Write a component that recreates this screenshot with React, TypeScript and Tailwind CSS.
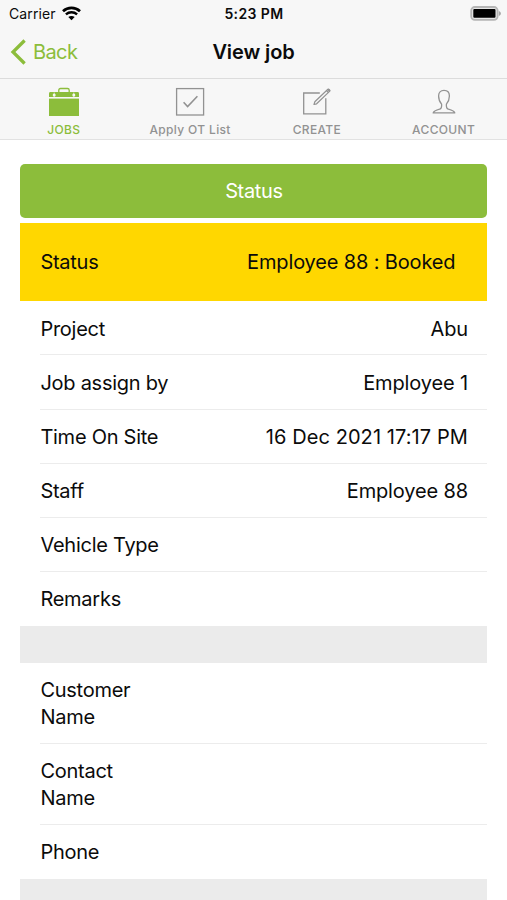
import type { ReactNode } from 'react';
import clsx from 'clsx';

interface TabItem {
  label: string;
  icon: ReactNode;
  active?: boolean;
}

interface RowProps {
  label: string;
  value?: string;
  wide?: boolean;
  last?: boolean;
}

function WifiIcon() {
  return (
    <svg width="19" height="15" viewBox="0 0 19 15" fill="none" className="mb-px">
      <path d="M1 5.2C5.8 .7 13.2 .7 18 5.2" stroke="#000" strokeWidth="2.7" />
      <path d="M3.9 8.4C7.1 5.5 11.9 5.5 15.1 8.4" stroke="#000" strokeWidth="2.4" />
      <path d="M9.5 14.2 6.3 11.1c1.8-1.6 4.6-1.6 6.4 0z" fill="#000" />
    </svg>
  );
}

function BatteryIcon() {
  return (
    <svg width="32" height="15" viewBox="0 0 32 15" className="mb-px">
      <rect x="1.2" y="1" width="26.4" height="12.8" rx="3.6" fill="#e6e6e6" stroke="#b5b5b5" strokeWidth="1.8" />
      <rect x="3.3" y="3" width="22.2" height="8.8" rx="1" fill="#000" />
      <path d="M28.8 5v5c1.3-.5 2.1-1.4 2.1-2.5S30.1 5.5 28.8 5z" fill="#a6a6a6" />
    </svg>
  );
}

function JobsIcon() {
  return (
    <svg width="32" height="30" viewBox="0 0 32 30" fill="none">
      <path d="M10.8 5V3.2c0-1.2.6-1.7 1.7-1.7h7c1.1 0 1.7.5 1.7 1.7V5" stroke="#8cbd3b" strokeWidth="1.3" />
      <path d="M1 10V6.5C1 5.5 1.5 5 2.5 5h27c1 0 1.5.5 1.5 1.5V10z" fill="#8cbd3b" />
      <path d="M1 11.6h30V29H1z" fill="#8cbd3b" />
      <path d="M6.2 5.5v5M25.8 5.5v5" stroke="#f7f7f7" strokeWidth=".6" />
      <circle cx="6.2" cy="8" r="1.5" fill="#f7f7f7" />
      <circle cx="25.8" cy="8" r="1.5" fill="#f7f7f7" />
    </svg>
  );
}

function ChecklistIcon() {
  return (
    <svg width="32" height="30" viewBox="0 0 32 30" fill="none" stroke="#929292">
      <rect x="2.6" y="1.6" width="27" height="26.4" strokeWidth="1.3" />
      <path d="m9.6 15.3 4 4.2 9.8-10.2" strokeWidth="1.6" />
    </svg>
  );
}

function CreateIcon() {
  return (
    <svg width="32" height="30" viewBox="0 0 32 30" fill="none" stroke="#929292">
      <path d="M18.8 6H2.7v20.9h22.1V11.3" strokeWidth="1.3" />
      <path d="m13 17.5.8-2.7L26.9 2.3c.8-.7 2.6.9 1.9 1.800L15.600 16.800z" strokeWidth="1.2" strokeLinejoin="round" />
      <path d="m25.500 3.600 1.900 1.900" strokeWidth="1.3" />
      <path d="m26.900 2.300 1.900 1.800" strokeWidth="1.8" />
    </svg>
  );
}

function AccountIcon() {
  return (
    <svg width="32" height="30" viewBox="0 0 32 30" fill="none" stroke="#929292">
      <path
        d="M13.6 17.2c-1.7-2-3-5-3-8.2 0-3.5 2-5.600 5.400-5.600s5.400 2.100 5.400 5.600c0 3.200-1.300 6.200-3 8.200-.3 2.900.1 4.300 2 5 3.500 1 5.900 1.700 6.400 3.700H5.200c.5-2 2.900-2.700 6.400-3.700 1.900-.7 2.300-2.100 2-5z"
        strokeWidth="1.3"
        strokeLinejoin="round"
      />
    </svg>
  );
}

const tabs: TabItem[] = [
  { label: 'JOBS', icon: <JobsIcon />, active: true },
  { label: 'Apply OT List', icon: <ChecklistIcon /> },
  { label: 'CREATE', icon: <CreateIcon /> },
  { label: 'ACCOUNT', icon: <AccountIcon /> },
];

const jobRows: RowProps[] = [
  { label: 'Project', value: 'Abu' },
  { label: 'Job assign by', value: 'Employee 1' },
  { label: 'Time On Site', value: '16 Dec 2021 17:17 PM', wide: true },
  { label: 'Staff', value: 'Employee 88' },
  { label: 'Vehicle Type' },
  { label: 'Remarks' },
];

const customerRows: RowProps[] = [
  { label: 'Customer Name' },
  { label: 'Contact Name' },
  { label: 'Phone' },
];

function Row({ label, value, wide, last }: RowProps) {
  return (
    <div
      className={clsx(
        'ml-5 flex justify-between border-b pt-[14.3px] pr-[19.5px] pb-[11.8px]',
        last ? 'border-transparent' : 'border-[#ececec]'
      )}
    >
      <span className="max-w-[130px]">{label}</span>
      {value && (
        <span className={clsx('whitespace-nowrap', wide ? 'tracking-[0.08px]' : 'tracking-[-0.15px]')}>{value}</span>
      )}
    </div>
  );
}

function Header() {
  return (
    <header className="border-b border-[#dcdcdc] bg-[#f7f7f7]">
      <div className="grid h-[27px] grid-cols-3 items-center pr-[5px] pl-[9px] text-[14px]">
        <div className="flex items-center gap-[6px]">
          <span className="tracking-[0.1px]">Carrier</span>
          <WifiIcon />
        </div>
        <span className="pr-[3px] text-center font-semibold tracking-[0.4px]">5:23 PM</span>
        <div className="flex justify-end">
          <BatteryIcon />
        </div>
      </div>
      <div className="grid h-[51px] grid-cols-3 items-center px-[10px] pb-px text-[20px]">
        <button className="flex items-center gap-[7px] text-[#8cbd3b]">
          <svg width="16" height="26" viewBox="0 0 16 26" fill="none" className="mb-px">
            <path d="M14.6 1.5 3 13l11.6 11.5" stroke="#8cbd3b" strokeWidth="3.3" />
          </svg>
          <span className="tracking-[-0.6px]">Back</span>
        </button>
        <h1 className="text-center font-semibold tracking-[-0.1px]">View job</h1>
      </div>
    </header>
  );
}

function TabBar() {
  return (
    <nav className="grid h-[61px] grid-cols-4 border-b border-[#e2e2e2] bg-[#f7f7f7] pt-[8px]">
      {tabs.map((tab) => (
        <button
          key={tab.label}
          className={clsx(
            'flex flex-col items-center',
            tab.active ? 'pl-px text-[#8cbd3b]' : 'text-[#929292]'
          )}
        >
          {tab.icon}
          <span className="mt-[5px] text-[12px] leading-4 font-medium tracking-[0.35px]">{tab.label}</span>
        </button>
      ))}
    </nav>
  );
}

export default function App() {
  return (
    <div className="h-[900px] overflow-hidden bg-white font-['Inter',sans-serif] text-[#0b0b0b]">
      <Header />
      <TabBar />
      <main className="pt-[23.5px] pr-[19.6px] pl-[20.4px] text-[20px] leading-[27px] tracking-[-0.26px]">
        <button className="h-[54.5px] w-full rounded-[5px] bg-[#8cbd3b] pt-[2px] tracking-[-0.35px] text-white">
          Status
        </button>
        <section className="mt-[5px] flex h-[78.4px] items-center justify-between bg-[#ffd700] pt-px pr-8 pl-5">
          <span>Status</span>
          <span className="tracking-[-0.15px]">Employee 88 : Booked</span>
        </section>
        <section>
          {jobRows.map((row, i) => (
            <Row key={row.label} {...row} last={i === jobRows.length - 1} />
          ))}
        </section>
        <div className="h-[36.7px] bg-[#ebebeb]" />
        <section>
          {customerRows.map((row, i) => (
            <Row key={row.label} {...row} last={i === customerRows.length - 1} />
          ))}
        </section>
        <div className="h-9 bg-[#ebebeb]" />
      </main>
    </div>
  );
}
